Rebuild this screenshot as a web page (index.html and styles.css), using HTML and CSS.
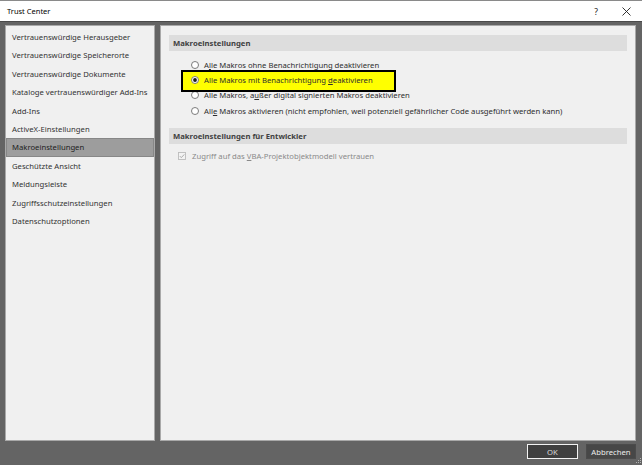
FILE: index.html
```html
<!DOCTYPE html>
<html lang="de">
<head>
<meta charset="utf-8">
<title>Trust Center</title>
<link rel="stylesheet" href="styles.css">
</head>
<body>
<div class="window">
  <header class="titlebar">
    <span class="title">Trust Center</span>
    <div class="ctrls">
      <span class="help">?</span>
      <span class="close"><svg width="9" height="9" viewBox="0 0 9 9"><path d="M0.5 0.5 L8.5 8.5 M8.5 0.5 L0.5 8.5" stroke="#1e1e1e" stroke-width="0.9" fill="none"/></svg></span>
    </div>
  </header>
  <div class="main">
    <nav class="sidebar">
      <ul class="nav-list">
        <li class="nav-item">Vertrauenswürdige Herausgeber</li>
        <li class="nav-item">Vertrauenswürdige Speicherorte</li>
        <li class="nav-item">Vertrauenswürdige Dokumente</li>
        <li class="nav-item">Kataloge vertrauenswürdiger Add-Ins</li>
        <li class="nav-item">Add-Ins</li>
        <li class="nav-item">ActiveX-Einstellungen</li>
        <li class="nav-item selected">Makroeinstellungen</li>
        <li class="nav-item">Geschützte Ansicht</li>
        <li class="nav-item">Meldungsleiste</li>
        <li class="nav-item">Zugriffsschutzeinstellungen</li>
        <li class="nav-item">Datenschutzoptionen</li>
      </ul>
    </nav>
    <section class="content">
      <div class="section-head">Makroeinstellungen</div>
      <div class="options">
        <div class="opt">
          <svg class="radio" width="8" height="8" viewBox="0 0 8 8"><circle cx="4" cy="4" r="3.5" fill="#fff" stroke="#6e6e6e" stroke-width="0.9"/></svg>
          <span>A<u>l</u>le Makros ohne Benachrichtigung deaktivieren</span>
        </div>
        <div class="opt marked">
          <span class="highlight"></span>
          <svg class="radio" width="8" height="8" viewBox="0 0 8 8"><circle cx="4" cy="4" r="3.5" fill="#fff" stroke="#6e6e6e" stroke-width="0.9"/><circle cx="4" cy="4" r="1.9" fill="#1a1a1a"/></svg>
          <span>Alle Makros mit Benachrichtigung <u>d</u>eaktivieren</span>
        </div>
        <div class="opt">
          <svg class="radio" width="8" height="8" viewBox="0 0 8 8"><circle cx="4" cy="4" r="3.5" fill="#fff" stroke="#6e6e6e" stroke-width="0.9"/></svg>
          <span>Alle Makros, a<u>u</u>ßer digital signierten Makros deaktivieren</span>
        </div>
        <div class="opt">
          <svg class="radio" width="8" height="8" viewBox="0 0 8 8"><circle cx="4" cy="4" r="3.5" fill="#fff" stroke="#6e6e6e" stroke-width="0.9"/></svg>
          <span>All<u>e</u> Makros aktivieren (nicht empfohlen, weil potenziell gefährlicher Code ausgeführt werden kann)</span>
        </div>
      </div>
      <div class="section-head">Makroeinstellungen für Entwickler</div>
      <div class="check disabled">
        <svg class="checkbox" width="8" height="8" viewBox="0 0 8 8"><rect x="0.5" y="0.5" width="7" height="7" fill="#f3f3f3" stroke="#bcbcbc" stroke-width="0.9"/><path d="M1.8 4.1 L3.3 5.6 L6.3 2.4" fill="none" stroke="#a4a4a4" stroke-width="0.9"/></svg>
        <span>Zugriff auf das <u>V</u>BA-Projektobjektmodell vertrauen</span>
      </div>
    </section>
  </div>
  <footer class="footer">
    <button class="btn default">OK</button>
    <button class="btn">Abbrechen</button>
    <svg class="grip" width="5" height="5" viewBox="0 0 5 5"><g fill="#b4b4b4"><rect x="4" y="0" width="1" height="1"/><rect x="2" y="2" width="1" height="1"/><rect x="4" y="2" width="1" height="1"/><rect x="0" y="4" width="1" height="1"/><rect x="2" y="4" width="1" height="1"/><rect x="4" y="4" width="1" height="1"/></g></svg>
  </footer>
</div>
</body>
</html>
```
FILE: styles.css
```css
* { box-sizing: border-box; }

html, body {
  margin: 0;
  padding: 0;
}

body {
  width: 642px;
  height: 465px;
  overflow: hidden;
  background: #646464;
  font-family: "Noto Sans", "Open Sans", sans-serif;
  font-size: 7.7px;
  color: #2e2e2e;
}

.window {
  width: 642px;
  height: 465px;
  display: flex;
  flex-direction: column;
}

.titlebar {
  height: 22px;
  flex: none;
  background: #fff;
  border-top: 1px solid #8a8a8a;
  border-bottom: 1px solid #4a4a4a;
  display: flex;
  align-items: center;
  padding-left: 7px;
}

.title {
  font-size: 7.5px;
  color: #000;
}

.ctrls {
  margin-left: auto;
  display: flex;
  align-items: center;
  padding-right: 1px;
}

.help {
  width: 30px;
  text-align: center;
  font-size: 8.5px;
  color: #222;
}

.close {
  width: 30px;
  display: flex;
  justify-content: center;
}

.main {
  height: 419px;
  flex: none;
  display: flex;
  gap: 5px;
  padding: 3px 6px 0 5px;
}

.sidebar {
  width: 150px;
  flex: none;
  background: #f0f0f0;
  border: 1px solid #a9a9a9;
  padding-top: 2px;
}

.nav-list {
  list-style: none;
  margin: 0;
  padding: 0;
}

.nav-item {
  height: 18.4px;
  line-height: 18.4px;
  padding-left: 6px;
  color: #333;
  white-space: nowrap;
}

.nav-item.selected {
  background: #9d9d9d;
  box-shadow: inset 0 0 0 1px #878787;
  color: #1e1e1e;
}

.content {
  flex: 1;
  background: #f0f0f0;
  border: 1px solid #a9a9a9;
  padding: 9px 8px;
}

.section-head {
  height: 16px;
  line-height: 16px;
  background: #dddddd;
  font-weight: bold;
  color: #414141;
  padding-left: 4px;
}

.options {
  display: flex;
  flex-direction: column;
  padding: 6px 0 0 22px;
  margin-bottom: 10px;
}

.opt {
  height: 15.3px;
  display: flex;
  align-items: center;
  gap: 5px;
  color: #2e2e2e;
  white-space: nowrap;
}

.opt.marked {
  position: relative;
  z-index: 0;
}

.highlight {
  position: absolute;
  z-index: -1;
  left: -10px;
  top: -2.3px;
  width: 215px;
  height: 22px;
  background: #ffff00;
  border: 2px solid #000;
}

.radio, .checkbox {
  flex: none;
  display: block;
}

.check {
  height: 15px;
  margin-top: 4px;
  display: flex;
  align-items: center;
  gap: 6px;
  padding-left: 9px;
}

.check.disabled {
  color: #8a8a8a;
}

.footer {
  flex: 1;
  position: relative;
  display: flex;
  justify-content: flex-end;
  align-items: flex-start;
  gap: 8px;
  padding: 3px 6px 0 0;
}

.btn {
  height: 15px;
  width: 50px;
  padding: 0;
  font-family: "Noto Sans", "Open Sans", sans-serif;
  font-size: 7.7px;
  color: #ececec;
  background: #474747;
  border: 1px solid #4b4b4b;
}

.btn.default {
  width: 51px;
  background: #3f3f3f;
  border-color: #f2f2f2;
  color: #dcdcdc;
}

.grip {
  position: absolute;
  right: 1px;
  bottom: 2px;
}
```
